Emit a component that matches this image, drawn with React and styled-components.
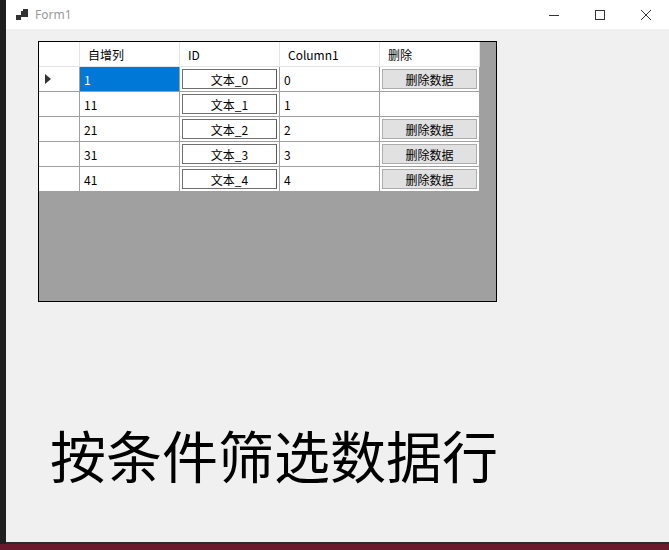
import React from 'react';
import styled, { createGlobalStyle } from 'styled-components';

const Global = createGlobalStyle`
  html, body { margin: 0; padding: 0; background: #1f1f1f; overflow: hidden; }
  body { font-family: "Noto Sans CJK SC", "Microsoft YaHei", sans-serif; }
`;

const Screen = styled.div`
  width: 669px;
  height: 550px;
  display: flex;
  flex-direction: column;
`;

const Window = styled.div`
  margin-left: 6px;
  width: 663px;
  height: 544px;
  background: #f0f0f0;
  display: flex;
  flex-direction: column;
  border-bottom: 2px solid #2b2b2b;
  box-sizing: border-box;
`;

const Taskbar = styled.div`
  flex: 1;
  background: #6a1a2c;
`;

const TitleBar = styled.div`
  height: 29px;
  background: #fff;
  display: flex;
  align-items: center;
  padding-left: 10px;
`;

const Title = styled.span`
  font-family: "Segoe UI", "Noto Sans", sans-serif;
  font-size: 12px;
  color: #999;
  margin-left: 7px;
  flex: 1;
`;

const CaptionBtn = styled.div`
  width: 46px;
  height: 29px;
  display: flex;
  align-items: center;
  justify-content: center;
`;

const Client = styled.div`
  flex: 1;
  padding: 12px 0 0 32px;
  display: flex;
  flex-direction: column;
`;

const Grid = styled.div`
  width: 459px;
  height: 261px;
  border: 1px solid #000;
  box-sizing: border-box;
  background: #a0a0a0;
  display: flex;
  flex-direction: column;
`;

const Row = styled.div`
  display: grid;
  grid-template-columns: 41px 100px 100px 100px 100px;
  height: 25px;
  width: 441px;
`;

const Cell = styled.div`
  background: ${p => (p.$sel ? '#0078d7' : '#fff')};
  color: ${p => (p.$sel ? '#fff' : '#000')};
  border-right: 1px solid ${p => (p.$head ? '#e4e4e4' : '#a0a0a0')};
  border-bottom: 1px solid ${p => (p.$head ? '#e4e4e4' : '#a0a0a0')};
  box-sizing: border-box;
  font-size: 12px;
  display: flex;
  align-items: center;
  padding-left: ${p => (p.$head ? 8 : 4)}px;
  overflow: hidden;
`;

const BtnCell = styled(Cell)`
  padding: 2px;
`;

const TextBox = styled.div`
  flex: 1;
  height: 100%;
  border: 1px solid #707070;
  border-right-color: #5a5a5a;
  box-sizing: border-box;
  display: flex;
  align-items: center;
  justify-content: center;
  font-size: 12px;
  background: #fff;
`;

const Button = styled(TextBox)`
  background: #e1e1e1;
  border-color: #adadad;
`;

const BigText = styled.div`
  margin-top: 124px;
  margin-left: 12px;
  font-size: 56px;
  color: #000;
  line-height: 1;
`;

const rows = [
  ['1', '文本_0', '0', true],
  ['11', '文本_1', '1', false],
  ['21', '文本_2', '2', true],
  ['31', '文本_3', '3', true],
  ['41', '文本_4', '4', true],
];

export default function App() {
  return (
    <Screen>
      <Global />
      <Window>
        <TitleBar>
          <svg width="12" height="12" viewBox="0 0 12 12">
            <rect x="0" y="6" width="5" height="5" fill="#333" />
            <rect x="5" y="2" width="4" height="6" fill="#333" />
            <rect x="7" y="0" width="5" height="8" fill="#333" />
          </svg>
          <Title>Form1</Title>
          <CaptionBtn>
            <svg width="10" height="10"><line x1="0" y1="5.5" x2="10" y2="5.5" stroke="#333" /></svg>
          </CaptionBtn>
          <CaptionBtn>
            <svg width="10" height="10"><rect x="0.5" y="0.5" width="9" height="9" fill="none" stroke="#333" /></svg>
          </CaptionBtn>
          <CaptionBtn>
            <svg width="10" height="10"><path d="M0 0L10 10M10 0L0 10" stroke="#333" /></svg>
          </CaptionBtn>
        </TitleBar>
        <Client>
          <Grid>
            <Row>
              <Cell $head />
              <Cell $head>自增列</Cell>
              <Cell $head>ID</Cell>
              <Cell $head>Column1</Cell>
              <Cell $head>删除</Cell>
            </Row>
            {rows.map(([a, b, c, btn], i) => (
              <Row key={a}>
                <Cell style={{ paddingLeft: 6 }}>
                  {i === 0 && (
                    <svg width="6" height="10"><path d="M0 0L6 5L0 10Z" fill="#333" /></svg>
                  )}
                </Cell>
                <Cell $sel={i === 0}>{a}</Cell>
                <BtnCell><TextBox>{b}</TextBox></BtnCell>
                <Cell>{c}</Cell>
                <BtnCell>{btn && <Button>删除数据</Button>}</BtnCell>
              </Row>
            ))}
          </Grid>
          <BigText>按条件筛选数据行</BigText>
        </Client>
      </Window>
      <Taskbar />
    </Screen>
  );
}
